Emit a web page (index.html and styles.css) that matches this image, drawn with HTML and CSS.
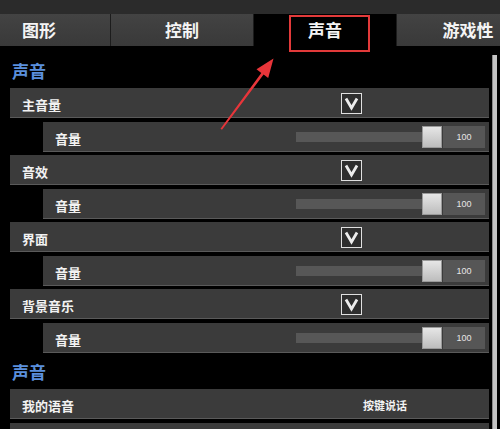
FILE: index.html
```html
<html>
<head>
<title>声音设置</title>
<link rel="stylesheet" href="styles.css">
</head>
<body>

<div class="topbar"></div>

<div class="tabs">
    <div class="tab">图形</div>
    <div class="tab">控制</div>
    <div class="tab active">声音</div>
    <div class="tab">游戏性</div>
</div>

<div class="page">
    <div class="list">
        <div class="heading first">声音</div>

        <div class="row main">
            <span class="label">主音量</span>
            <span class="check"><svg width="21" height="21" viewBox="0 0 21 21"><polyline points="5,5.5 10.5,15 16,5.5" fill="none" stroke="#ececec" stroke-width="2.8" stroke-linejoin="miter"/></svg></span>
        </div>
        <div class="row sub">
            <span class="label">音量</span>
            <span class="slider"><span class="track"></span><span class="thumb"></span><span class="value">100</span></span>
        </div>

        <div class="row main">
            <span class="label">音效</span>
            <span class="check"><svg width="21" height="21" viewBox="0 0 21 21"><polyline points="5,5.5 10.5,15 16,5.5" fill="none" stroke="#ececec" stroke-width="2.8" stroke-linejoin="miter"/></svg></span>
        </div>
        <div class="row sub">
            <span class="label">音量</span>
            <span class="slider"><span class="track"></span><span class="thumb"></span><span class="value">100</span></span>
        </div>

        <div class="row main">
            <span class="label">界面</span>
            <span class="check"><svg width="21" height="21" viewBox="0 0 21 21"><polyline points="5,5.5 10.5,15 16,5.5" fill="none" stroke="#ececec" stroke-width="2.8" stroke-linejoin="miter"/></svg></span>
        </div>
        <div class="row sub">
            <span class="label">音量</span>
            <span class="slider"><span class="track"></span><span class="thumb"></span><span class="value">100</span></span>
        </div>

        <div class="row main">
            <span class="label">背景音乐</span>
            <span class="check"><svg width="21" height="21" viewBox="0 0 21 21"><polyline points="5,5.5 10.5,15 16,5.5" fill="none" stroke="#ececec" stroke-width="2.8" stroke-linejoin="miter"/></svg></span>
        </div>
        <div class="row sub">
            <span class="label">音量</span>
            <span class="slider"><span class="track"></span><span class="thumb"></span><span class="value">100</span></span>
        </div>

        <div class="heading">声音</div>

        <div class="row voice">
            <span class="label">我的语音</span>
            <span class="option">按键说话</span>
        </div>
        <div class="row voice"></div>
    </div>
    <div class="scrollbar"></div>
</div>

<div class="highlight"></div>
<svg class="arrow" width="500" height="429" viewBox="0 0 500 429">
    <polygon points="220.5,128.8 261.3,72.9 256.5,69.2 273.5,58.5 268.2,77.9 263.6,74.6 222,129.8" fill="#e8353a"/>
</svg>

</body>
</html>
```

FILE: styles.css
```css
body { margin: 0; width: 500px; height: 429px; overflow: hidden; background: #000; font-family: "Noto Sans CJK SC", "Noto Sans", sans-serif; color: #f2f2f2; }
.topbar { height: 14px; background: #2b2b2b; }
.tabs { display: flex; gap: 1px; height: 32px; background: #1c1c1c; overflow: hidden; }
.tab { flex: 0 0 142px; height: 32px; line-height: 31px; text-align: center; font-size: 17px; font-weight: bold; color: #f4f4f4; background: linear-gradient(#434343, #393939); }
.tab:first-child { margin-left: -32px; }
.tab.active { background: #000; }
.page { display: flex; height: 383px; overflow: hidden; }
.list { width: 479px; margin-left: 10px; }
.scrollbar { width: 5px; height: 374px; margin: 9px 0 0 3px; background: #c4c4c4; border-left: 1px solid #8a8a8a; box-sizing: border-box; }
.heading { height: 33px; padding-top: 6px; box-sizing: border-box; line-height: 20px; font-size: 17px; font-weight: bold; color: #5b8fdc; padding-left: 2px; }
.heading.first { height: 42px; padding-top: 15px; }
.row { display: flex; align-items: center; height: 30px; box-sizing: border-box; background: #3b3b3b; border-bottom: 1px solid #5a5a5a; font-size: 13px; font-weight: bold; }
.row .label { padding-left: 12px; padding-top: 3px; }
.row.main { margin-bottom: 4px; }
.row.main .label { width: 319px; }
.row.sub { margin-left: 33px; margin-bottom: 3px; }
.row.sub .label { flex: 1; }
.row.voice { margin-bottom: 4px; }
.row.voice .label { width: 318px; }
.check { display: flex; width: 21px; height: 21px; box-sizing: border-box; border: 1px solid #e0e0e0; background: #2e2e2e; margin-top: 1px; }
.check svg { margin: -1px; }
.slider { display: flex; align-items: center; padding-right: 4px; }
.track { width: 126px; height: 10px; background: #575757; }
.thumb { width: 20px; height: 22px; box-sizing: border-box; background: linear-gradient(#e6e6e6, #bdbdbd); border: 1px solid #9a9a9a; }
.value { width: 42px; height: 22px; margin-left: 1px; line-height: 22px; text-align: center; background: #565656; font-family: "Liberation Sans", sans-serif; font-size: 9px; font-weight: normal; color: #e6e6e6; }
.option { width: 90px; text-align: center; font-size: 11px; padding-top: 3px; }
.highlight { position: absolute; left: 289px; top: 15px; width: 81px; height: 37px; box-sizing: border-box; border: 2px solid #e23a3a; }
.arrow { position: absolute; left: 0; top: 0; }
```
